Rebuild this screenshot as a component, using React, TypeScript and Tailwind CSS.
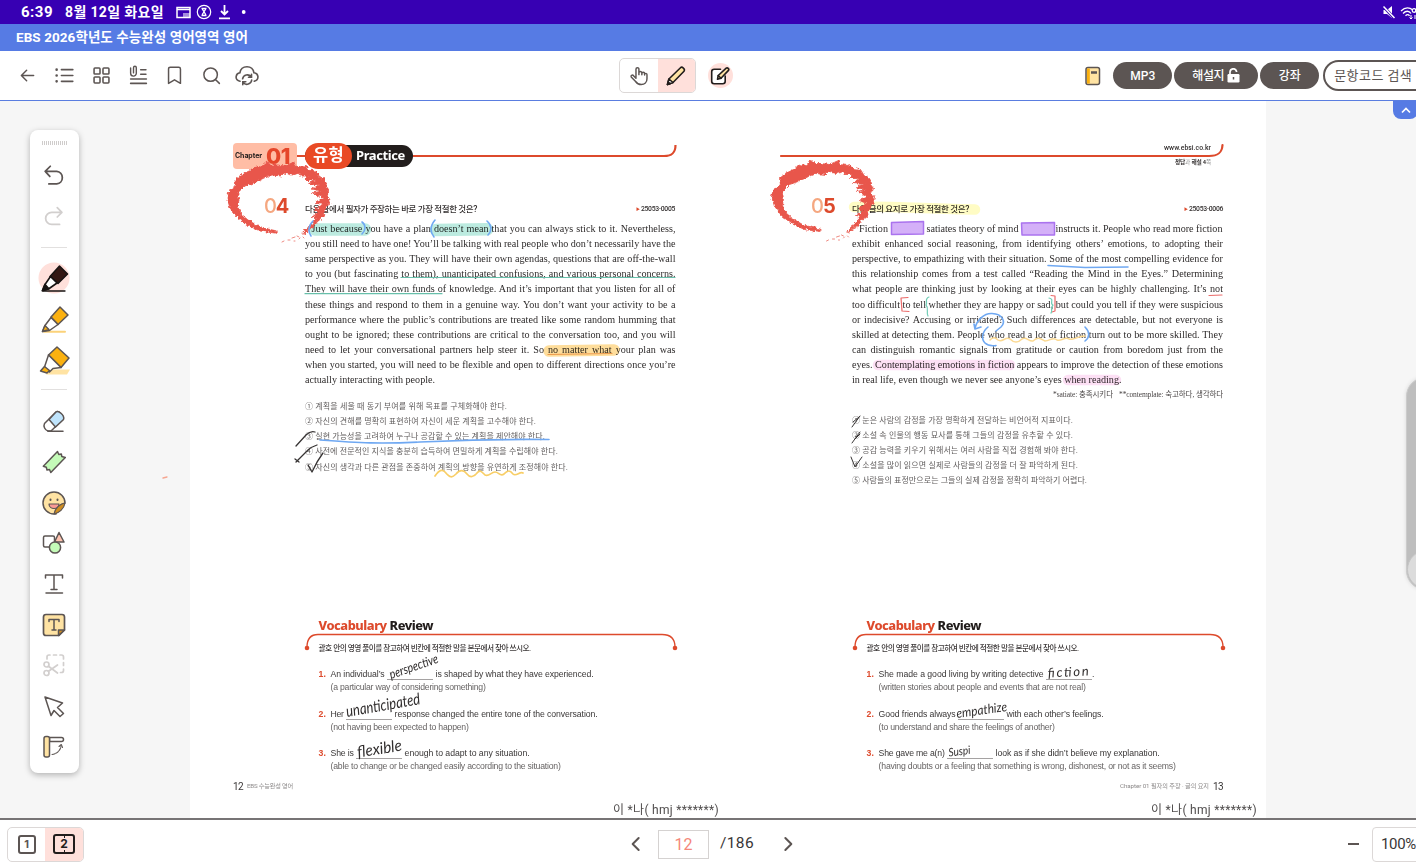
import { useLayoutEffect, useRef, useState } from 'react';
import type { ReactNode } from 'react';

/* Text run that spreads its letters (or its words) over an exact width. */
function Fit({ w, by = 'letter', className = '', children }: { w: number; by?: 'letter' | 'word'; className?: string; children: ReactNode }) {
  const ref = useRef<HTMLSpanElement>(null);
  const [gap, setGap] = useState(0);
  useLayoutEffect(() => {
    const el = ref.current;
    if (!el) return;
    const text = el.textContent || '';
    const parts = by === 'word' ? text.split(' ').length - 1 : text.length;
    setGap((w - el.getBoundingClientRect().width) / Math.max(parts, 1));
  }, []);
  return (
    <span ref={ref} className={`inline-block shrink-0 whitespace-pre ${className}`} style={by === 'word' ? { wordSpacing: gap } : { letterSpacing: gap }}>
      {children}
    </span>
  );
}

function Icon({ s = 24, vb = 24, className = '', children }: { s?: number; vb?: number; className?: string; children: ReactNode }) {
  return (
    <svg width={s} height={s} viewBox={`0 0 ${vb} ${vb}`} fill="none" stroke="#5c5553" strokeWidth="1.5" strokeLinecap="round" strokeLinejoin="round" className={`shrink-0 ${className}`}>
      {children}
    </svg>
  );
}

function StatusBar() {
  return (
    <div className="flex h-6 shrink-0 items-center bg-[#3700b3] pl-[21px] text-[14px] font-bold text-white">
      <Fit w={32} className="text-[15px]">6:39</Fit>
      <Fit w={99} className="ml-3">8월 12일 화요일</Fit>
      <svg width="72" height="16" viewBox="0 0 72 16" fill="none" stroke="#fff" strokeWidth="1.5" className="ml-[12px]">
        <path d="M1 3.5h13v10H1zM1 5.500h13" />
        <path d="M7 9h7v4.500h-7z" fill="#fff" fillOpacity=".55" stroke="none" />
        <circle cx="28" cy="8" r="6.700" strokeWidth="1.200" />
        <path d="M25.500 4.500h5M25.500 11.500h5M26.300 4.500c0 2 3.400 4 3.400 7M29.700 4.500c0 2-3.400 4-3.400 7" strokeWidth="1.300" />
        <path d="M48.500 1v9M45 7l3.500 3.500L52 7M43 14.300h11" strokeWidth="1.800" />
        <circle cx="67.700" cy="8" r="1.900" fill="#fff" stroke="none" />
      </svg>
      <svg width="36" height="18" viewBox="0 0 36 18" fill="none" stroke="#fff" strokeWidth="1.300" className="ml-auto shrink-0">
        <path d="M3.500 7h3.500l5-4v12l-5-4H3.500z" fill="#fff" stroke="none" />
        <path d="M3 3l11.500 12.500" stroke="#3700b3" strokeWidth="3" />
        <path d="M3.500 3.500l11 11.500" strokeWidth="1.500" />
        <path d="M21 8c4-4 8-4 12-1M23 10.500c3-3 6-3 8 0M25.500 12.800c1.500-1.500 3-1.500 4 0" />
        <circle cx="34" cy="7.500" r="1.800" />
        <path d="M31 12v4M29.500 14.500l1.500 1.500 1.500-1.500M35 16v-4" strokeWidth="1" />
      </svg>
    </div>
  );
}

const toolIcons: ReactNode[] = [
  <path d="M19 12H5.500M11 6l-6 6 6 6" strokeWidth="1.700" />,
  <g strokeWidth="1.900"><path d="M8.500 5.300h13M8.500 12h13M8.500 18.700h13" /><path d="M3 5.300h.01M3 12h.01M3 18.700h.01" strokeWidth="3" /></g>,
  <g strokeWidth="1.800"><rect x="3.500" y="3.500" width="6.800" height="6.800" rx="1" /><rect x="13.700" y="3.500" width="6.800" height="6.800" rx="1" /><rect x="3.500" y="13.700" width="6.800" height="6.800" rx="1" /><rect x="13.700" y="13.700" width="6.800" height="6.800" rx="1" /></g>,
  <g strokeWidth="1.600"><path d="M3 3.500v6a3.200 3.200 0 0 0 6.500 0V3a1.600 1.600 0 0 0-3.200 0v6" /><path d="M14.500 5.500h6M14.500 10.500h6M3 16h18M3 21h18" strokeWidth="1.800" /></g>,
  <path d="M5.200 21V4.500A2 2 0 0 1 7.200 2.500h9.600a2 2 0 0 1 2 2V21L12 17z" strokeWidth="1.700" />,
  <g strokeWidth="1.700"><circle cx="11" cy="11" r="7.700" /><path d="M16.800 16.800l4.200 4.200" /></g>,
];

const pill = 'flex h-[27px] items-center justify-center rounded-full bg-[#5c5553] text-[12px] font-medium text-white shrink-0';

function Toolbar() {
  return (
    <div className="flex h-[50px] shrink-0 items-center border-b border-[#5a7de0] bg-white">
      <div className="ml-[9.600px] flex items-center">
        {toolIcons.map((d, i) => (
          <div key={i} className="flex w-[36.700px] justify-center"><Icon s={21}>{d}</Icon></div>
        ))}
      </div>
      <svg width="24" height="24" viewBox="0 0 24 24" fill="none" stroke="#5c5553" strokeWidth="1.600" strokeLinecap="round" className="ml-[5px] shrink-0">
        <path d="M5 17.300C2 16.500.8 14.500 1.200 12.300c.3-2 1.700-3.200 3.700-3.500C5.500 5 8.300 2.700 12 2.700s6.300 2.200 6.900 6c2.200.2 3.800 1.600 4 3.700.2 2.300-1.200 4.300-3.700 4.800" />
        <path d="M7.600 14.800a4.800 4.800 0 0 1 8.500-2M16.500 10.200v3h-3M16.700 16a4.800 4.800 0 0 1-8.500 2.500M7.800 20.800v-3h3" />
      </svg>
      <div className="ml-[360px] flex h-[35px] w-[77px] shrink-0 overflow-hidden rounded-[5px] border border-[#dcd8d7]">
        <div className="flex w-[38px] items-center justify-center">
          <Icon s={22}><path d="M8.700 13.500V4.500a1.600 1.600 0 0 1 3.200 0V10.500V8.800a1.500 1.500 0 0 1 3.200 0V10.700v-1.200a1.500 1.500 0 0 1 3 0V11v-.700a1.300 1.300 0 0 1 2.600.3V15c0 4-2.700 6.300-6.200 6.300-3 0-4.700-1-6.200-3.300L3.500 13c-.8-1.600 1.200-2.700 2.500-1.400l2.700 2.900" strokeWidth="1.600" /></Icon>
        </div>
        <div className="flex flex-1 items-center justify-center bg-[#ffe0db]">
          <svg width="22" height="22" viewBox="0 0 22 22" fill="#ffe3a3" stroke="#221d1c" strokeWidth="1.600" strokeLinejoin="round"><path d="M2.500 19.500l1.400-5.500L15.500 2.700c1.500-1.500 5 1.500 3.500 3.500L8 17.500z" /><path d="M3.900 14L8 17.500l-5.500 2z" fill="#fff" /><path d="M2.500 19.500l2.500-.8-1.800-1.700z" fill="#221d1c" /></svg>
        </div>
      </div>
      <div className="ml-[12px] flex size-[25px] shrink-0 items-center justify-center rounded-full bg-[#ffe0db]">
        <svg width="20" height="20" viewBox="0 0 20 20" fill="none" stroke="#221d1c" strokeWidth="1.600" strokeLinejoin="round" strokeLinecap="round"><path d="M10.500 3.300H4.200A2.500 2.500 0 0 0 1.700 5.800v9.500a2.500 2.500 0 0 0 2.500 2.500h8.500a2.500 2.500 0 0 0 2.500-2.500V10" fill="#fff" /><path d="M7.500 13.300l.7-3.800 8-7.300c1.300-1 3.300.8 2.300 2.200l-7.500 7.900z" fill="#ffe3a3" /><path d="M8.200 9.500l2.800 2.800" /></svg>
      </div>
      <svg width="16" height="20" viewBox="0 0 16 20" className="ml-[352.500px] shrink-0"><rect x="1" y="1.500" width="13.500" height="17" rx="2" fill="#ffe3a3" stroke="#5c5553" strokeWidth="1.500" /><path d="M2 2.500h2.800v15H2z" fill="#fbb110" /><path d="M6 6.500h6" stroke="#5c5553" strokeWidth="2.500" /></svg>
      <div className={`${pill} ml-[12px] w-[59px]`}><Fit w={25}>MP3</Fit></div>
      <div className={`${pill} ml-[2px] w-[84px] gap-[3px]`}>
        <Fit w={32}>해설지</Fit>
        <svg width="13" height="15" viewBox="0 0 13 15" fill="none"><path d="M3 6V4a3.300 3.300 0 0 1 6.500-.7V4" stroke="#fff" strokeWidth="1.700" /><rect x=".5" y="6" width="12" height="8.500" rx="1.200" fill="#fff" /><path d="M6.500 9v2.500" stroke="#5c5553" strokeWidth="1.500" /></svg>
      </div>
      <div className={`${pill} ml-[2px] w-[59px]`}><Fit w={22}>강좌</Fit></div>
      <div className="ml-[4px] flex h-[31px] w-[120px] shrink-0 items-center rounded-full border-2 border-[#5c5553] pl-[9px] text-[13px] text-[#5c5553]"><Fit w={78}>문항코드 검색</Fit></div>
    </div>
  );
}

const pens: ReactNode[] = [
  <g><circle cx="14" cy="14" r="15.500" fill="#ffe0db" stroke="none" /><path d="M10 12.500L19.500 2l8 8-9.500 9.500z" fill="#341713" stroke="#181312" /><path d="M2.500 26.500L5 20.500 10.500 12.500l6.500 6.500-8.500 6z" fill="#fff" stroke="#181312" strokeWidth="1.600" /><path d="M2.300 26.800l2.600-6.500 4 4.500z" fill="#181312" stroke="#181312" /><path d="M3 27h22" stroke="#181312" strokeWidth="1.300" /></g>,
  <g><path d="M4 26.800h21" stroke="#fbd27a" strokeWidth="2" /><path d="M11 12l9-10 8 8-10 9.500z" fill="#fbb110" /><path d="M2.500 26.500L5 20.500 11 12.500l7 7-8.500 6z" fill="#fff" /><path d="M2.500 26.500l2.400-6 4 4z" fill="#fbb110" /></g>,
  <g><path d="M9 23.500h21l-3 5H6z" fill="#ffe3a3" stroke="none" /><path d="M8.500 9L17 1l12 11-8 9.500z" fill="#fbb110" /><path d="M8.500 9l12.500 12.500-8 1-3.500 3.500-5-5z" fill="#fff" /><path d="M.5 25l4-4.500 5 4-2.500 2.500z" fill="#fbb110" /></g>,
];

const extras: ReactNode[] = [
  <g><path d="M4.500 16.500L16 5c2-2 9 4 7 7.500L11 24H8c-3-1-5-4.500-3.500-7.500z" fill="#fff" /><path d="M9 12.500L16 5c2.500-2 9 3.500 7.500 7.500L15.500 20z" fill="#bfe4fc" /><path d="M8 24.300h15" /></g>,
  <path d="M17.500 3.500l1.300 3 2.500-.5.500 2.500 3.500 1-14.500 15-1.300-3-2.500.5-.7-2.800-3-1z" fill="#c4fbb8" />,
  <g><path d="M14 25A11 11 0 1 1 25 14c-4 1-9 5-9 11z" fill="#ffe3a3" /><path d="M9 15h10c0 6-10 6-10 0z" fill="#fa9a94" strokeWidth="1.200" /><path d="M10.500 10.500v.5M17.500 10.500v.5" strokeWidth="2" /><path d="M14 25c1-6 6-10 11-11-1 6-6 10-11 11z" fill="#cf8d20" strokeWidth="1.200" /></g>,
  <g><rect x="3.500" y="7" width="11" height="11" rx="1.500" fill="#fff" /><path d="M14.500 13L19 3.500l5 9.500z" fill="#ffc3b0" /><circle cx="15" cy="18.500" r="5.600" fill="#c4fbb8" /></g>,
  <path d="M5.500 8V5h17v3M14 5v14.500M11 19.500h6M6 23h16.500" />,
  <g><path d="M6 3.500h16a2.500 2.500 0 0 1 2.500 2.500v13l-5.500 5.500H6A2.500 2.500 0 0 1 3.500 22V6A2.500 2.500 0 0 1 6 3.500z" fill="#ffe3a3" strokeWidth="1.700" /><path d="M9 10.500V8.500h10v2M14 8.500v10M12 19h4" /><path d="M18.500 24.500v-5.500h6z" fill="#cf8d20" /></g>,
  <g stroke="#d2cfce" strokeWidth="1.700"><circle cx="6.500" cy="13.500" r="2.500" /><circle cx="6.500" cy="22" r="2.500" /><path d="M8.500 15.300L17.500 22M8.500 20.300l9-6.300" /><path d="M7 8V6a2 2 0 0 1 2-2h1M13.500 4h3M20 4h1.500a2 2 0 0 1 2 2v2M23.500 11.500v3M23.500 18v1.500a2 2 0 0 1-2 2h-1" /></g>,
  <path d="M5 5l17.500 6-5 4.500 6 6-3.500 3-6-6-3 5z" />,
  <g><path d="M9.500 4.500h12a2 2 0 0 1 0 4h-12z" fill="#fff" /><rect x="4" y="3.500" width="5.500" height="20.500" rx="2" fill="#ffe3a3" /><path d="M12 21.500c5-.7 8-4 9-8" strokeWidth="1.100" strokeDasharray="3 1" /><path d="M19 13.500l2.300-2 1.200 3" strokeWidth="1.100" /></g>,
];

function Palette() {
  return (
    <div className="absolute left-[29.500px] top-[29px] flex h-[643px] w-[49.500px] flex-col items-center rounded-lg bg-white shadow-[0_2px_6px_rgba(0,0,0,0.28)]">
      <div className="mt-[11px] flex h-1 gap-px">
        {Array.from({ length: 13 }, (_, i) => <span key={i} className="h-1 w-px bg-[#cfcccb]" />)}
      </div>
      <div className="mt-[11px] flex h-[40.600px] items-center"><Icon s={26} vb={28}><path d="M10 3.500L4.500 9l5 5.500M4.500 9H17a6.800 6.800 0 0 1 0 13.500H8.500" strokeWidth="1.900" /></Icon></div>
      <div className="flex h-[40.600px] items-center"><Icon s={26} vb={28}><path d="M17.500 4l5 5-5 5M22 9H11.500a6.500 6.500 0 0 0 0 13H20" strokeWidth="1.900" stroke="#d2cfce" /></Icon></div>
      <div className="mt-[10px] h-px w-[26px] bg-[#e2e0df]" />
      <div className="mt-[10px] flex flex-col">
        {pens.map((d, i) => <div key={i} className="flex h-[40.600px] items-center"><Icon s={28} vb={28} className="overflow-visible">{d}</Icon></div>)}
      </div>
      <div className="mt-[9px] h-px w-[26px] bg-[#e2e0df]" />
      <div className="mt-[11px] flex flex-col">
        {extras.map((d, i) => <div key={i} className="flex h-[40.700px] items-center"><Icon s={28} vb={28}>{d}</Icon></div>)}
      </div>
    </div>
  );
}

const leftPassage = [
  ' Just because you have a plan doesn’t mean that you can always stick to it. Nevertheless,',
  'you still need to have one! You’ll be talking with real people who don’t necessarily have the',
  'same perspective as you. They will have their own agendas, questions that are off-the-wall',
  'to you (but fascinating to them), unanticipated confusions, and various personal concerns.',
  'They will have their own funds of knowledge. And it’s important that you listen for all of',
  'these things and respond to them in a genuine way. You don’t want your activity to be a',
  'performance where the public’s contributions are treated like some random humming that',
  'ought to be ignored; these contributions are critical to the conversation too, and you will',
  'need to let your conversational partners help steer it. So no matter what your plan was',
  'when you started, you will need to be flexible and open to different directions once you’re',
];
const rightPassage = [
  'exhibit enhanced social reasoning, from identifying others’ emotions, to adopting their',
  'perspective, to empathizing with their situation. Some of the most compelling evidence for',
  'this relationship comes from a test called “Reading the Mind in the Eyes.” Determining',
  'what people are thinking just by looking at their eyes can be highly challenging. It’s not',
  'too difficult to tell whether they are happy or sad, but could you tell if they were suspicious',
  'or indecisive? Accusing or irritated? Such differences are detectable, but not everyone is',
  'skilled at detecting them. People who read a lot of fiction turn out to be more skilled. They',
  'can distinguish romantic signals from gratitude or caution from boredom just from the',
  'eyes. Contemplating emotions in fiction appears to improve the detection of these emotions',
  'in real life, even though we never see anyone’s eyes when reading.',
];
const leftOptions: [string, number][] = [
  ['① 계획을 세울 때 동기 부여를 위해 목표를 구체화해야 한다.', 202],
  ['② 자신의 견해를 명확히 표현하여 자신이 세운 계획을 고수해야 한다.', 231],
  ['③ 실현 가능성을 고려하여 누구나 공감할 수 있는 계획을 제안해야 한다.', 240],
  ['④ 사전에 전문적인 지식을 충분히 습득하여 면밀하게 계획을 수립해야 한다.', 253],
  ['⑤ 자신의 생각과 다른 관점을 존중하여 계획의 방향을 유연하게 조정해야 한다.', 263],
];
const rightOptions: [string, number][] = [
  ['① 눈은 사람의 감정을 가장 명확하게 전달하는 비언어적 지표이다.', 221],
  ['② 소설 속 인물의 행동 묘사를 통해 그들의 감정을 유추할 수 있다.', 221],
  ['③ 공감 능력을 키우기 위해서는 여러 사람을 직접 경험해 봐야 한다.', 226],
  ['④ 소설을 많이 읽으면 실제로 사람들의 감정을 더 잘 파악하게 된다.', 226],
  ['⑤ 사람들의 표정만으로는 그들의 실제 감정을 정확히 파악하기 어렵다.', 235],
];

const line = 'flex h-[15.180px] items-center whitespace-nowrap';
const serif = 'font-["Liberation_Serif"] text-[10.150px] text-[#2e2b2b]';

function Options({ items }: { items: [string, number][] }) {
  return (
    <div className="text-[8px] text-[#605d5d]">
      {items.map(([t, w]) => <div key={t} className={line}><Fit w={w}>{t}</Fit></div>)}
    </div>
  );
}

interface Vocab { a: string; aw: number; g1: number; bw: number; g2: number; b: string; b2: number; hint: string; hw: number }
const leftVocab: Vocab[] = [
  { a: 'An individual’s', aw: 54, g1: 2.5, bw: 46, g2: 2.5, b: 'is shaped by what they have experienced.', b2: 158, hint: '(a particular way of considering something)', hw: 155 },
  { a: 'Her', aw: 13, g1: 2.5, bw: 46, g2: 2.5, b: 'response changed the entire tone of the conversation.', b2: 203, hint: '(not having been expected to happen)', hw: 138 },
  { a: 'She is', aw: 23, g1: 2.5, bw: 46, g2: 2.5, b: 'enough to adapt to any situation.', b2: 125, hint: '(able to change or be changed easily according to the situation)', hw: 230 },
];
const rightVocab: Vocab[] = [
  { a: 'She made a good living by writing detective', aw: 165, g1: 2.5, bw: 46, g2: 0, b: '.', b2: 3, hint: '(written stories about people and events that are not real)', hw: 207 },
  { a: 'Good friends always', aw: 77, g1: 2.5, bw: 46, g2: 2.5, b: 'with each other’s feelings.', b2: 97, hint: '(to understand and share the feelings of another)', hw: 176 },
  { a: 'She gave me a(n)', aw: 66, g1: 2.5, bw: 46, g2: 2.5, b: 'look as if she didn’t believe my explanation.', b2: 164, hint: '(having doubts or a feeling that something is wrong, dishonest, or not as it seems)', hw: 297 },
];

function VocabularyReview({ items }: { items: Vocab[] }) {
  return (
    <div className="relative font-['Liberation_Sans','Noto_Sans_CJK_KR',sans-serif]">
      <svg width="376" height="40" viewBox="0 0 376 40" fill="none" stroke="#dd4a2c" className="absolute left-0 top-[17px]">
        <path d="M3 14C3 6 7 1.500 14 1.500H358C367 1.500 371 6 371 14" strokeWidth="1.300" />
        <circle cx="3" cy="15" r="2.300" fill="#dd4a2c" stroke="none" /><circle cx="371" cy="15" r="2.300" fill="#dd4a2c" stroke="none" />
      </svg>
      <div className="pl-[14.600px]">
        <div className="flex h-[18px] items-center font-['Noto_Sans'] text-[12.800px] font-extrabold">
          <Fit w={68} className="text-[#dd4a2c]">Vocabulary</Fit><Fit w={43.5} className="ml-[3px] text-[#221d1c]">Review</Fit>
        </div>
        <div className="mt-[7px] flex h-[14px] items-center text-[7.700px] font-medium text-[#3c3838]"><Fit w={212}>괄호 안의 영영 풀이를 참고하여 빈칸에 적절한 말을 본문에서 찾아 쓰시오.</Fit></div>
        <div className="mt-[12.500px] flex flex-col gap-[13.700px]">
          {items.map((v, i) => (
            <div key={i} className="text-[8.700px] text-[#3a3737]">
              <div className="flex h-[13px] items-center whitespace-nowrap">
                <span className="w-[12px] font-bold text-[#dd4a2c]">{i + 1}.</span>
                <Fit w={v.aw}>{v.a}</Fit>
                <span className="mt-[10px] h-px shrink-0 bg-[#a5a2a2]" style={{ width: v.bw, marginLeft: v.g1, marginRight: v.g2 }} />
                <Fit w={v.b2}>{v.b}</Fit>
              </div>
              <div className="flex h-[13px] items-center pl-[12px] text-[#676464]"><Fit w={v.hw}>{v.hint}</Fit></div>
            </div>
          ))}
        </div>
      </div>
    </div>
  );
}

function Question({ n, text, w, code }: { n: string; text: string; w: number; code: string }) {
  return (
    <div className="flex h-[24px] items-center">
      <div className="mb-[3px] w-[41px] font-['Inter'] text-[20px] leading-none"><Fit w={24}><span className="font-medium text-[#f5a780]">{n[0]}</span><span className="font-bold text-[#dd4a2c]">{n[1]}</span></Fit></div>
      <div className="flex flex-1 items-center justify-between pt-[5px]">
        <Fit w={w} className="text-[8.500px] font-medium text-[#332f2f]">{text}</Fit>
        <span className="flex items-center text-[6.800px] font-medium text-[#332f2f]"><span className="mr-px text-[4px] text-[#dd4a2c]">▶</span><Fit w={34}>{code}</Fit></span>
      </div>
    </div>
  );
}

function LeftPage() {
  return (
    <div className="flex w-[538px] flex-col pt-[42px]">
      <div className="relative flex h-[26px] items-center pl-[43px]">
        <svg width="390" height="26" viewBox="0 0 390 26" fill="none" className="absolute left-[100px] top-0"><path d="M0 13H374C382 13 385.500 10 385.500 2" stroke="#dd4a2c" strokeWidth="2.200" /></svg>
        <div className="relative flex h-[26px] w-[64px] items-center rounded-[4px] bg-[#ffbda5] pl-[2px]">
          <Fit w={27} className="font-['Inter'] text-[7px] font-bold text-[#221d1c]">Chapter</Fit>
          <Fit w={24} className="ml-[4px] font-['Inter'] text-[22px] font-extrabold leading-none text-[#e5462a]">01</Fit>
        </div>
        <div className="relative ml-[8px] flex h-[22px] w-[108px] items-center rounded-full bg-[#221d1c]">
          <div className="flex h-[26px] w-[47px] items-center justify-center rounded-full bg-[#e94a25] text-[16.500px] font-bold text-white"><Fit w={31}>유형</Fit></div>
          <Fit w={49} className="ml-[4px] font-['Noto_Sans'] text-[13px] font-bold text-white">Practice</Fit>
        </div>
      </div>
      <div className="mt-[26px] w-[485px] pl-[74px]"><Question n="04" text="다음 글에서 필자가 주장하는 바로 가장 적절한 것은?" w={172} code="25053-0005" /></div>
      <div className={`ml-[115px] mt-[1.800px] ${serif}`}>
        {leftPassage.map((t) => (
          <div key={t} className={line}>{t[0] === ' ' ? <Fit by="word" w={364} className="ml-[6.500px]">{t.trim()}</Fit> : <Fit by="word" w={370.5}>{t}</Fit>}</div>
        ))}
        <div className={line}><Fit w={130}>actually interacting with people.</Fit></div>
      </div>
      <div className="ml-[115px] mt-[11.600px]"><Options items={leftOptions} /></div>
      <div className="ml-[114px] mt-[141.200px]"><VocabularyReview items={leftVocab} /></div>
      <div className="ml-[43px] mt-[6.500px] flex h-[14px] items-center text-[6.200px] text-[#8c8989]"><Fit w={10} className="text-[10px] text-[#3a3737]">12</Fit><Fit w={46} className="ml-[4px]">EBS 수능완성 영어</Fit></div>
      <div className="mt-[9px] flex h-[15px] items-center justify-end pr-[9px] text-[12px] text-[#4f4c4c]"><Fit w={106}>이 *나( hmj *******)</Fit></div>
    </div>
  );
}

function RightPage() {
  return (
    <div className="flex w-[538px] flex-col pt-[42px]">
      <div className="relative flex h-[26px] flex-col items-end pr-[55px] text-[#332f2f]">
        <svg width="446" height="26" viewBox="0 0 446 26" fill="none" className="absolute left-[51px] top-0"><path d="M2 13H430C439 13 443 10 443.500 2" stroke="#dd4a2c" strokeWidth="2.200" strokeLinecap="round" /></svg>
        <Fit w={47} className="text-[6.800px] font-medium leading-[10px]">www.ebsi.co.kr</Fit>
        <Fit w={36} className="mt-[4.500px] text-[5.700px] font-bold leading-[9px]">정답<span className="font-normal text-[#999]">과</span> 해설 4<span className="font-normal text-[#999]">쪽</span></Fit>
      </div>
      <div className="mt-[26px] w-[495px] pl-[83px]"><Question n="05" text="다음 글의 요지로 가장 적절한 것은?" w={117} code="25053-0006" /></div>
      <div className={`ml-[124px] mt-[1.800px] ${serif}`}>
        <div className={line}>
          <Fit w={29} className="ml-[7px]">Fiction</Fit>
          <Fit by="word" w={92} className="ml-[38.500px]">satiates theory of mind</Fit>
          <Fit by="word" w={167} className="ml-[37px]">instructs it. People who read more fiction</Fit>
        </div>
        {rightPassage.map((t, i) => <div key={t} className={line}><Fit by="word" w={i === 9 ? 269.5 : 371}>{t}</Fit></div>)}
      </div>
      <div className="ml-[124px] flex h-[14px] w-[371px] items-center justify-end gap-[6px] text-[7.500px] text-[#4a4646] font-['Liberation_Serif','Noto_Sans_CJK_KR',serif]">
        <Fit w={60}>*satiate: 충족시키다</Fit><Fit w={104}>**contemplate: 숙고하다, 생각하다</Fit>
      </div>
      <div className="ml-[124px] mt-[11.300px]"><Options items={rightOptions} /></div>
      <div className="ml-[124px] mt-[127.500px]"><VocabularyReview items={rightVocab} /></div>
      <div className="mr-[43px] mt-[6.500px] flex h-[14px] items-center justify-end pr-0 text-[6.200px] text-[#8c8989]"><Fit w={89}>Chapter 01 필자의 주장 · 글의 요지</Fit><Fit w={10} className="ml-[4px] text-[10px] text-[#3a3737]">13</Fit></div>
      <div className="mt-[9px] flex h-[15px] items-center justify-end pr-[9px] text-[12px] text-[#4f4c4c]"><Fit w={106}>이 *나( hmj *******)</Fit></div>
    </div>
  );
}

const ring = 'M275 233l-15-2-13-6-10-8-7-9-3-10 2-7 7-5-1-6 6-5 8-4 7-5 5 1 6-5 4 3 6 0 8 1 9-4 1 4 9 1 1-2 4 5 7 1 3 5 5 3 3 4-1 3 3 4-2 5 3 5-3 8-3 4-1 5-6 5-3 5-5 3-4 4-2 0 2-4 6-5 5-7-4-1 7-5-5-2 8-5-7-3 9-4-12-5 10-2-11-2 9-4-12-1 7-4-10 0 4-4-10 0 2-3-9 2-8-2-3 3-10-1-7 3-6 3-7 3-6 2-4 4-3 5 1 5-1 7 3 7 7 6 10 6 10 3 9 2z';
const dust = 'M302 233l3 1M297 236l2 1M292 238l3-1M288 240l2 0M282 242l2-1M303 237l1 1M299 239l1-1M294 241l1 0M307 230l2 1M309 227l1 2';

/* Everything drawn by hand on the sheet, in window coordinates. */
function Ink() {
  return (
    <>
      <svg viewBox="0 101 1416 717" className="pointer-events-none absolute inset-0 h-full w-full mix-blend-multiply" fill="none" strokeLinecap="round">
        <g stroke="#bcebe0" strokeWidth="12.500"><path d="M315 229.500L365 229.500M436 230L487 229.300" /></g>
        <path d="M549 351L614 350" stroke="#fedd9b" strokeWidth="11.500" />
        <path d="M854 207C890 206 930 209 975 209.500" stroke="#fffcc4" strokeWidth="10.500" />
        <path d="M878 365H1010M1068 380H1116" stroke="#fde0f5" strokeWidth="10.500" />
      </svg>
      <svg viewBox="0 101 1416 717" className="pointer-events-none absolute inset-0 h-full w-full" fill="none" strokeLinecap="round" strokeLinejoin="round">
        <defs>
          <filter id="crayon" x="-5%" y="-5%" width="110%" height="110%">
            <feTurbulence type="fractalNoise" baseFrequency="0.35" numOctaves="2" seed="4" />
            <feDisplacementMap in="SourceGraphic" scale="5" xChannelSelector="R" yChannelSelector="G" />
          </filter>
        </defs>
        <g fill="#e8564b" stroke="#e8564b" strokeWidth=".8" filter="url(#crayon)"><path d={ring} /><path d={ring} transform="translate(544.500 -1.500)" /></g>
        <g stroke="#ee8a82" strokeWidth="1"><path d={dust} /><path d={dust} transform="translate(544.500 -1)" /></g>
        <g stroke="#6fa8f2" strokeWidth="1.600">
          <path d="M313 221C308 226 308 232 311 236M362 222C366 225 366 230 362 234M435 220C430 226 430 232 434 237M487 221C492 225 492 231 488 235" />
          <path d="M320 440C360 443 380 444 420 442C460 440 500 439 549 439.500M1048 265.500L1085 267.500L1128 267" />
          <path d="M975 328C977 320 984 313 992 313.500C1003 314 1006 322 1001 327L996 331M974 324L975 329L981 327M988 327C982 332 981 339 985 343C988 346 992 346 996 345.500M1085 327C1090 332 1090 337 1085 341" />
        </g>
        <path d="M401 277.500H675M305 293.700H442" stroke="#67bfaa" strokeWidth="1.200" />
        <path d="M548 354.500L612 353.500" stroke="#ed9a4c" strokeWidth="1.200" />
        <path d="M435 476C439 470 442 469 445 472C450 478 452 478 456 474C460 469 464 470 467 474C470 478 474 477 477 473C480 469 482 472 485 475C489 477 491 472 495 472C499 472 500 477 504 474C508 470 510 470 513 474C516 477 520 471 523 473" stroke="#f8ce66" strokeWidth="1.700" />
        <path d="M990 340C993 336 996 338 998 340C1002 343 1006 336 1010 339C1014 343 1018 343 1022 339C1026 336 1029 342 1033 341C1038 336 1041 339 1045 341C1050 341 1053 336 1057 340C1061 342 1065 336 1069 339C1073 341 1077 336 1085 336" stroke="#fbd992" strokeWidth="1.500" />
        <g fill="#d4b0f8" stroke="#aa73ee" strokeWidth="1.500"><path d="M891.500 222.500L923.500 221.500V234L891.500 234.500z" /><path d="M1021.500 223L1054.500 222.500V235L1022 235z" /></g>
        <path d="M908 297.500L901 298L902 311L909 311.500M1051 295.500L1055 296V311L1052 312M1209 295.500L1222 295" stroke="#ea6a69" strokeWidth="1.200" />
        <path d="M929 297C924 299 928 302 926 305C929 308 926 312 928 316M1049 298C1055 299 1049 304 1053 305C1050 308 1053 311 1051 313" stroke="#71cdb6" strokeWidth="1.200" />
        <g stroke="#373434" strokeWidth="1.300">
          <path d="M296 446L306 435C309 432 312 431 315 432M296 462L308 450C311 447 314 446 317 445M295 459L299 462M308 465L312 472C316 463 320 457 323 453" />
          <path d="M852 427L860 416M852 443L860 432M851 457L855 467L862 457M853 422L859 417M855 439L860 434" strokeWidth="1" />
        </g>
        <path d="M163 478L167 477" stroke="#f6a691" strokeWidth="1.300" />
        <g fill="#302d2d" className="font-['Lato'] italic">
          <text transform="translate(391 679) rotate(-19)" fontSize="13" textLength="51" lengthAdjust="spacingAndGlyphs">perspective</text>
          <text transform="translate(347 717) rotate(-10)" fontSize="16" textLength="75" lengthAdjust="spacingAndGlyphs">unanticipated</text>
          <text transform="translate(358 757.500) rotate(-9)" fontSize="16" textLength="45" lengthAdjust="spacingAndGlyphs">flexible</text>
          <text transform="translate(1048 677.500) rotate(-3)" fontSize="13" textLength="41" lengthAdjust="spacing">fiction</text>
          <text transform="translate(957 718) rotate(-8)" fontSize="13" textLength="51" lengthAdjust="spacingAndGlyphs">empathize</text>
          <text transform="translate(949 756.500) rotate(-7)" fontSize="11.500" textLength="22" lengthAdjust="spacingAndGlyphs">Suspi</text>
        </g>
      </svg>
    </>
  );
}

function Footer() {
  return (
    <div className="flex h-[50px] shrink-0 items-center border-t-2 border-[#777475] bg-white">
      <div className="ml-[7px] flex h-[35px] w-[77px] shrink-0 overflow-hidden rounded-[5px] border border-[#dcd8d7] font-['Inter'] font-bold">
        <div className="flex w-[37px] items-center justify-center"><div className="flex h-[19px] w-[18px] items-center justify-center rounded-[3px] border-2 border-[#5c5553] text-[11px] text-[#5c5553]">1</div></div>
        <div className="flex flex-1 items-center justify-center bg-[#ffe0db]">
          <div className="relative flex h-[20px] w-[22px] items-center justify-center rounded-[3px] border-2 border-[#221d1c] text-[12px] text-[#221d1c]">
            <span className="absolute left-[8.500px] top-0 h-[2px] w-px bg-[#221d1c]" />2<span className="absolute bottom-0 left-[8.500px] h-[2px] w-px bg-[#221d1c]" />
          </div>
        </div>
      </div>
      <Icon s={16} className="ml-[544px]"><path d="M16 3l-9 9 9 9" strokeWidth="3" /></Icon>
      <div className="ml-[14px] flex h-[29px] w-[51px] shrink-0 items-center justify-center border border-[#d5d2d1] pt-px font-['Roboto'] text-[16px] text-[#f5877a]"><Fit w={18}>12</Fit></div>
      <Fit w={34} className="ml-[11px] font-['Roboto'] text-[15.500px] text-[#3a3737]">/186</Fit>
      <Icon s={16} className="ml-[26px]"><path d="M8 3l9 9-9 9" strokeWidth="3" /></Icon>
      <div className="ml-[552px] h-[2px] w-[11px] shrink-0 bg-[#5c5553]" />
      <div className="ml-[13px] flex h-[35px] w-[80px] shrink-0 items-center rounded-[4px] border border-[#dcd8d7] pl-[8px] font-['Roboto'] text-[15px] text-[#3a3737]"><Fit w={35}>100%</Fit></div>
    </div>
  );
}

export default function App() {
  return (
    <div className="flex h-[868px] w-[1416px] flex-col overflow-hidden bg-white font-['Roboto','Noto_Sans_CJK_KR',sans-serif]">
      <StatusBar />
      <div className="flex h-[27px] shrink-0 items-center bg-[#567be4] pl-[16px] text-[13.500px] font-bold text-white"><Fit w={232}>EBS 2026학년도 수능완성 영어영역 영어</Fit></div>
      <Toolbar />
      <div className="relative isolate h-[717px] shrink-0 overflow-hidden bg-[#f6f6f6]">
        <div className="ml-[190px] flex h-[717px] w-[1076px] bg-white"><LeftPage /><RightPage /></div>
        <Ink />
        <Palette />
        <div className="absolute left-[1393px] top-0 flex h-[18px] w-[25px] items-center justify-center rounded-b-[8px] bg-[#567be4]">
          <svg width="10" height="7" viewBox="0 0 10 7" fill="none" stroke="#fff" strokeWidth="1.700"><path d="M1 5.500l4-4 4 4" /></svg>
        </div>
        <div className="absolute left-[1406px] top-[276px] flex h-[213px] w-[39px] items-end overflow-hidden rounded-[20px] border border-[#cbcbcb] bg-[#bebebe] shadow-[0_0_4px_rgba(0,0,0,0.12)]">
          <div className="size-[39px] shrink-0 rounded-full border border-[#c4c4c4] bg-[#dcdcdc]" />
        </div>
      </div>
      <Footer />
    </div>
  );
}
